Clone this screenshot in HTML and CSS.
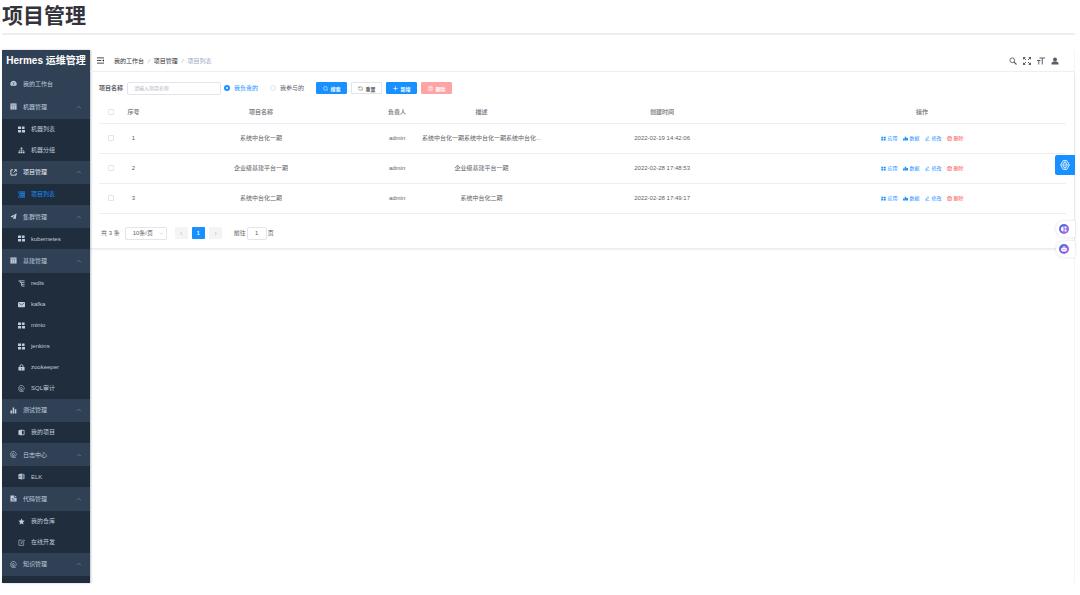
FILE: index.html
```html
<!DOCTYPE html>
<html lang="zh-CN">
  <head>
    <meta charset="UTF-8" />
    <meta name="viewport" content="width=device-width, initial-scale=1.0" />
    <title>项目管理</title>
    <link rel="stylesheet" href="styles.css" />
  </head>
  <body>
    <!-- 图标 -->
    <svg class="sprite" aria-hidden="true">
      <symbol id="i-dashboard" viewBox="0 0 16 16"><path d="M8 2a7 7 0 0 0-6 11h12A7 7 0 0 0 8 2z" fill="currentColor"/><path d="M8 11l1-6M4 9h1M11 9h1M5 5l1 1" stroke="#304156" stroke-width="1.5"/></symbol>
      <symbol id="i-table" viewBox="0 0 16 16"><path d="M1 1h14v14H1z" fill="currentColor"/><path d="M1 4.500h14M6 5v10M10.500 5v10" stroke="#304156" stroke-width=".8"/></symbol>
      <symbol id="i-grid" viewBox="0 0 16 16"><path d="M0 1h7v6H0zM0 9h7v6H0zM9 9h7v6H9zM9 1h6v6H9z" fill="currentColor"/></symbol>
      <symbol id="i-tree" viewBox="0 0 16 16"><path d="M6 1h4v4H6zM1 10h4v4H1zM6 10h4v4H6zM11 10h4v4h-4z" fill="currentColor"/><path d="M8 5v5M3 10V7.500h10V10" fill="none" stroke="currentColor" stroke-width="1.200"/></symbol>
      <symbol id="i-link" viewBox="0 0 16 16"><path d="M7 2H2v12h12V9M10 1.500h4.500V6M14 2L8 8" fill="none" stroke="currentColor" stroke-width="1.800"/></symbol>
      <symbol id="i-list" viewBox="0 0 16 16"><path d="M0 2.500h3M4 2.500h12M2 6.200h2M5 6.200h11M2 9.900h2M5 9.900h11M0 13.600h3M4 13.600h12" stroke="currentColor" stroke-width="2.400"/></symbol>
      <symbol id="i-plane" viewBox="0 0 16 16"><path d="M15 1L1 8l4 2 7-6-5 7v4l2-3 4 2z" fill="currentColor"/></symbol>
      <symbol id="i-treetable" viewBox="0 0 16 16"><path d="M1 2h14M7 6h8M9 10h6M9 14h6M5 2v4h2M8 6v8" fill="none" stroke="currentColor" stroke-width="1.800"/></symbol>
      <symbol id="i-mail" viewBox="0 0 16 16"><rect x="0" y="2" width="16" height="12" rx="1.500" fill="currentColor"/><path d="M2 5l6 4 6-4" fill="none" stroke="#1f2d3d" stroke-width="1.300"/></symbol>
      <symbol id="i-lock" viewBox="0 0 16 16"><rect x="1" y="7" width="14" height="8" rx="1" fill="currentColor"/><path d="M4.500 7V5a3.500 3.500 0 0 1 7 0v2" fill="none" stroke="currentColor" stroke-width="2"/><path d="M8 9.500v3" stroke="#1f2d3d" stroke-width="1.500"/></symbol>
      <symbol id="i-log" viewBox="0 0 16 16"><path d="M2 12V4l4-3h4l4 4v1M2 12l4 3h7" fill="none" stroke="currentColor" stroke-width="1.400"/><circle cx="7.500" cy="8" r="2.500" fill="none" stroke="currentColor" stroke-width="1.300"/><path d="M5 12h6l4-3-2-2" fill="none" stroke="currentColor" stroke-width="1.300"/></symbol>
      <symbol id="i-chart" viewBox="0 0 16 16"><path d="M1 8h3.500v7H1zM6 1h3.500v14H6zM11 5h3.500v10H11z" fill="currentColor"/></symbol>
      <symbol id="i-book" viewBox="0 0 16 16"><path d="M1 3l8-2v14l-8-2z" fill="currentColor"/><path d="M9 3h5v10H9" fill="none" stroke="currentColor" stroke-width="1.800"/></symbol>
      <symbol id="i-excel" viewBox="0 0 16 16"><path d="M1 3l8-2v14l-8-2z" fill="currentColor"/><path d="M9 3h5v10H9M9 6.500h5M9 9.500h5" fill="none" stroke="currentColor" stroke-width="1.500"/><path d="M3 6l3.500 4.500M6.500 6L3 10.500" stroke="#1f2d3d"/></symbol>
      <symbol id="i-doc" viewBox="0 0 16 16"><path d="M1 1h8v5h6v9H1z" fill="currentColor"/><path d="M10.500 1v3.500H15z" fill="currentColor"/><path d="M4 8.500h5M4 11.500h8" stroke="#304156" stroke-width="1.300"/></symbol>
      <symbol id="i-star" viewBox="0 0 16 16"><path d="M8 1l2.200 4.700 5 .6-3.700 3.500 1 5.200L8 12.500 3.500 15l1-5.200L.8 6.300l5-.6z" fill="currentColor"/></symbol>
      <symbol id="i-edit" viewBox="0 0 16 16"><path d="M9 2.500H2v12h11V8M7 10V8l6-6.500 2 2L9 10z" fill="none" stroke="currentColor" stroke-width="1.400"/></symbol>
      <symbol id="i-up" viewBox="0 0 16 16"><path d="M3 11l5-5 5 5" fill="none" stroke="currentColor" stroke-width="1.500"/></symbol>
      <symbol id="i-left" viewBox="0 0 16 16"><path d="M10 3L5 8l5 5" fill="none" stroke="currentColor" stroke-width="2"/></symbol>
      <symbol id="i-right" viewBox="0 0 16 16"><path d="M6 3l5 5-5 5" fill="none" stroke="currentColor" stroke-width="2"/></symbol>
      <symbol id="i-fold" viewBox="0 0 16 16"><path d="M0 2h16M0 8h10M0 14h16" stroke="currentColor" stroke-width="2"/><path d="M16 5v6l-4-3z" fill="currentColor"/></symbol>
      <symbol id="i-search" viewBox="0 0 16 16"><circle cx="6.500" cy="6.500" r="4.700" fill="none" stroke="currentColor" stroke-width="1.800"/><path d="M10 10l5 5" stroke="currentColor" stroke-width="2.200"/></symbol>
      <symbol id="i-round" viewBox="0 0 16 16"><circle cx="7.500" cy="7.500" r="6" fill="none" stroke="currentColor" stroke-width="1.800"/><path d="M12 12l3 3" stroke="currentColor" stroke-width="2"/></symbol>
      <symbol id="i-full" viewBox="0 0 16 16"><path d="M0 5.500V0h5.500zM10.500 0H16v5.500zM16 10.500V16h-5.500zM5.500 16H0v-5.500z" fill="currentColor"/><path d="M2 2l4 4M14 2l-4 4M14 14l-4-4M2 14l4-4" stroke="currentColor" stroke-width="2"/></symbol>
      <symbol id="i-size" viewBox="0 0 16 16"><path d="M5 2h11M10.500 2v13M0 7h7M3.500 7v8" stroke="currentColor" stroke-width="2"/></symbol>
      <symbol id="i-user" viewBox="0 0 16 16"><circle cx="8" cy="5" r="4" fill="currentColor"/><path d="M1 15v-3q0-2 4-3h6q4 1 4 3v3z" fill="currentColor"/></symbol>
      <symbol id="i-refresh" viewBox="0 0 16 16"><path d="M2 8V3h8a4 4 0 0 1 4 4v6H6a4 4 0 0 1-4-3M2 3l3 3" fill="none" stroke="currentColor" stroke-width="1.600"/></symbol>
      <symbol id="i-plus" viewBox="0 0 16 16"><path d="M8 1v14M1 8h14" stroke="currentColor" stroke-width="2"/></symbol>
      <symbol id="i-trash" viewBox="0 0 16 16"><path d="M0 4h16M5 4V1.500h6V4M2.500 4v10.500h11V4M6.300 7v5M9.700 7v5" fill="none" stroke="currentColor" stroke-width="1.700"/></symbol>
      <symbol id="i-menu" viewBox="0 0 16 16"><path d="M1 2h6v5H1zM9 2h6v5H9zM1 9h6v5H1zM9 9h6v5H9z" fill="currentColor"/></symbol>
      <symbol id="i-data" viewBox="0 0 16 16"><path d="M0 8h5v6H0zM5.500 2h5v12h-5zM11 6h5v8h-5z" fill="currentColor"/></symbol>
      <symbol id="i-pen" viewBox="0 0 16 16"><path d="M3 10l6-8 3 2-6 8-4 1zM2 15h13" fill="none" stroke="currentColor" stroke-width="1.600"/></symbol>
      <symbol id="i-setting" viewBox="0 0 16 16"><path d="M5 1h6l4 7-4 7H5L1 8z" fill="none" stroke="currentColor" stroke-width="1.300"/><ellipse cx="8" cy="8" rx="3.200" ry="4.500" fill="none" stroke="currentColor" stroke-width="1.200"/><path d="M8 1v14M1 8h14" stroke="currentColor" stroke-width=".8"/></symbol>
      <linearGradient id="violet" x1="0" y1="0" x2="1" y2="1"><stop offset="0" stop-color="#3f6be0"/><stop offset="1" stop-color="#c063e0"/></linearGradient>
    </svg>

    <h1 class="page-title">项目管理</h1>

    <div class="app">
      <nav class="sidebar">
        <div class="logo">Hermes 运维管理</div>
        <a class="group" href="#"><svg class="icon"><use href="#i-dashboard"/></svg>我的工作台</a>
        <a class="group" href="#"><svg class="icon"><use href="#i-table"/></svg>机器管理<svg class="arrow"><use href="#i-up"/></svg></a>
        <a class="sub" href="#"><svg class="icon"><use href="#i-grid"/></svg>机器列表</a>
        <a class="sub" href="#"><svg class="icon"><use href="#i-tree"/></svg>机器分组</a>
        <a class="group current" href="#"><svg class="icon"><use href="#i-link"/></svg>项目管理<svg class="arrow"><use href="#i-up"/></svg></a>
        <a class="sub active" href="#"><svg class="icon"><use href="#i-list"/></svg>项目列表</a>
        <a class="group" href="#"><svg class="icon"><use href="#i-plane"/></svg>集群管理<svg class="arrow"><use href="#i-up"/></svg></a>
        <a class="sub" href="#"><svg class="icon"><use href="#i-grid"/></svg>kubernetes</a>
        <a class="group" href="#"><svg class="icon"><use href="#i-table"/></svg>基建管理<svg class="arrow"><use href="#i-up"/></svg></a>
        <a class="sub" href="#"><svg class="icon"><use href="#i-treetable"/></svg>redis</a>
        <a class="sub" href="#"><svg class="icon"><use href="#i-mail"/></svg>kafka</a>
        <a class="sub" href="#"><svg class="icon"><use href="#i-grid"/></svg>minio</a>
        <a class="sub" href="#"><svg class="icon"><use href="#i-grid"/></svg>jenkins</a>
        <a class="sub" href="#"><svg class="icon"><use href="#i-lock"/></svg>zookeeper</a>
        <a class="sub" href="#"><svg class="icon"><use href="#i-log"/></svg>SQL审计</a>
        <a class="group" href="#"><svg class="icon"><use href="#i-chart"/></svg>测试管理<svg class="arrow"><use href="#i-up"/></svg></a>
        <a class="sub" href="#"><svg class="icon"><use href="#i-book"/></svg>我的项目</a>
        <a class="group" href="#"><svg class="icon"><use href="#i-log"/></svg>日志中心<svg class="arrow"><use href="#i-up"/></svg></a>
        <a class="sub" href="#"><svg class="icon"><use href="#i-excel"/></svg>ELK</a>
        <a class="group" href="#"><svg class="icon"><use href="#i-doc"/></svg>代码管理<svg class="arrow"><use href="#i-up"/></svg></a>
        <a class="sub" href="#"><svg class="icon"><use href="#i-star"/></svg>我的仓库</a>
        <a class="sub" href="#"><svg class="icon"><use href="#i-edit"/></svg>在线开发</a>
        <a class="group" href="#"><svg class="icon"><use href="#i-log"/></svg>知识管理<svg class="arrow"><use href="#i-up"/></svg></a>
        <div class="sidebar-end"></div>
      </nav>

      <main class="main">
        <header class="navbar">
          <svg class="fold"><use href="#i-fold"/></svg>
          <div class="breadcrumb">
            <a href="#">我的工作台</a><i>/</i><a href="#">项目管理</a><i>/</i><span>项目列表</span>
          </div>
          <div class="tools">
            <svg><use href="#i-search"/></svg>
            <svg><use href="#i-full"/></svg>
            <svg><use href="#i-size"/></svg>
            <svg><use href="#i-user"/></svg>
          </div>
        </header>

        <section class="card">
          <form class="filter">
            <label class="filter-label" for="name">项目名称</label>
            <input class="field name" id="name" type="text" placeholder="请输入项目名称" />
            <label class="radio"><input type="radio" name="scope" checked /><span>我负责的</span></label>
            <label class="radio"><input type="radio" name="scope" /><span>我参与的</span></label>
            <div class="buttons">
              <button class="btn primary" type="button"><svg><use href="#i-round"/></svg>搜索</button>
              <button class="btn" type="button"><svg><use href="#i-refresh"/></svg>重置</button>
              <button class="btn primary" type="button"><svg><use href="#i-plus"/></svg>新增</button>
              <button class="btn danger" type="button" disabled><svg><use href="#i-trash"/></svg>删除</button>
            </div>
          </form>

          <table class="table">
            <colgroup>
              <col class="col-check" /><col class="col-no" /><col class="col-name" /><col class="col-owner" /><col class="col-desc" /><col class="col-time" /><col />
            </colgroup>
            <thead>
              <tr>
                <th><input type="checkbox" aria-label="全选" /></th>
                <th>序号</th><th>项目名称</th><th>负责人</th><th>描述</th><th>创建时间</th><th>操作</th>
              </tr>
            </thead>
            <tbody>
              <tr>
                <td><input type="checkbox" aria-label="选择 1" /></td>
                <td>1</td><td>系统中台化一期</td><td>admin</td>
                <td>系统中台化一期系统中台化一期系统中台化...</td>
                <td>2022-02-19 14:42:06</td>
                <td><div class="actions"><a href="#"><svg><use href="#i-menu"/></svg>应用</a><a href="#"><svg><use href="#i-data"/></svg>数据</a><a href="#"><svg><use href="#i-pen"/></svg>修改</a><a class="del" href="#"><svg><use href="#i-trash"/></svg>删除</a></div></td>
              </tr>
              <tr>
                <td><input type="checkbox" aria-label="选择 2" /></td>
                <td>2</td><td>企业级基建平台一期</td><td>admin</td>
                <td>企业级基建平台一期</td>
                <td>2022-02-28 17:48:53</td>
                <td><div class="actions"><a href="#"><svg><use href="#i-menu"/></svg>应用</a><a href="#"><svg><use href="#i-data"/></svg>数据</a><a href="#"><svg><use href="#i-pen"/></svg>修改</a><a class="del" href="#"><svg><use href="#i-trash"/></svg>删除</a></div></td>
              </tr>
              <tr>
                <td><input type="checkbox" aria-label="选择 3" /></td>
                <td>3</td><td>系统中台化二期</td><td>admin</td>
                <td>系统中台化二期</td>
                <td>2022-02-28 17:49:17</td>
                <td><div class="actions"><a href="#"><svg><use href="#i-menu"/></svg>应用</a><a href="#"><svg><use href="#i-data"/></svg>数据</a><a href="#"><svg><use href="#i-pen"/></svg>修改</a><a class="del" href="#"><svg><use href="#i-trash"/></svg>删除</a></div></td>
              </tr>
            </tbody>
          </table>

          <div class="pagination">
            <span>共 3 条</span>
            <div class="select-wrap">
              <select class="field" aria-label="每页条数"><option>10条/页</option></select>
              <svg><use href="#i-up"/></svg>
            </div>
            <div class="pager">
              <button type="button" disabled aria-label="上一页"><svg><use href="#i-left"/></svg></button>
              <button class="on" type="button">1</button>
              <button type="button" disabled aria-label="下一页"><svg><use href="#i-right"/></svg></button>
            </div>
            <label class="jump">前往<input class="field" type="text" value="1" />页</label>
          </div>
        </section>
      </main>

      <!-- 右侧悬浮按钮 -->
      <button class="setting" type="button" aria-label="设置"><svg><use href="#i-setting"/></svg></button>
      <div class="floats">
        <button type="button" aria-label="翻译"><svg viewBox="0 0 20 20"><circle cx="10" cy="10" r="10" fill="url(#violet)"/><path d="M9 5a5 5 0 0 0 0 10zM11 5h4v4h-4zM11 11h4v4h-4z" fill="#fff"/></svg></button>
        <button type="button" aria-label="助手"><svg viewBox="0 0 20 20"><circle cx="10" cy="10" r="10" fill="url(#violet)"/><path d="M10 4v3" stroke="#fff" stroke-width="2"/><rect x="4" y="7" width="12" height="8" rx="4" fill="#fff"/><path d="M8 10v2M12 10v2" stroke="#6a67e0" stroke-width="1.500"/></svg></button>
      </div>
    </div>
  </body>
</html>
```
FILE: styles.css
```css
* {
  box-sizing: border-box;
}
body {
  margin: 0;
  padding: 0 5px 12px 2px;
  height: 100vh;
  display: flex;
  flex-direction: column;
  background: #fff;
  color: #606266;
  font-family: "Liberation Sans", "Noto Sans CJK SC", sans-serif;
  font-size: 6px;
  line-height: 10px;
}
a {
  color: inherit;
  text-decoration: none;
}
button,
input,
select {
  font-family: inherit;
  color: inherit;
  margin: 0;
}
.sprite {
  position: absolute;
  width: 0;
  height: 0;
}
.page-title {
  margin: 0 0 15px;
  height: 35px;
  border-bottom: 2px solid #eeeeef;
  color: #33333c;
  font-size: 21px;
  line-height: 31px;
}
.app {
  flex: 1;
  display: flex;
  position: relative;
  min-height: 0;
  border-right: 1px solid #f5f5f7;
}

/* 侧边栏 */
.sidebar {
  width: 88px;
  flex: none;
  display: flex;
  flex-direction: column;
  background: #304156;
  color: #bfcbd9;
  box-shadow: 1px 0 2px rgba(0, 21, 41, 0.25);
}
.logo {
  height: 22px;
  flex: none;
  line-height: 22px;
  font-size: 10px;
  font-weight: bold;
  color: #fff;
  text-align: center;
  white-space: nowrap;
}
.group,
.sub {
  display: flex;
  align-items: center;
  gap: 6px;
}
.group {
  flex: 1 1 23px;
  padding: 0 8px;
}
.sub {
  flex: 0 0 21px;
  padding: 0 16px;
  background: #1f2d3d;
}
.current {
  color: #f4f4f5;
}
.active {
  color: #1890ff;
}
.icon {
  width: 7px;
  height: 7px;
}
.arrow {
  width: 6px;
  height: 6px;
  margin-left: auto;
  color: #8592a1;
}
.sidebar-end {
  flex: 0 0 7px;
  background: #1f2d3d;
}

/* 顶部导航 */
.main {
  flex: 1;
  min-width: 0;
}
.navbar {
  display: flex;
  align-items: center;
  height: 22px;
  padding: 0 15px 0 7px;
  border-bottom: 1px solid #f3f4f6;
}
.fold {
  width: 7px;
  height: 7px;
  margin-right: 10px;
  color: #303133;
}
.breadcrumb {
  display: flex;
  color: #303133;
}
.breadcrumb i {
  margin: 0 4px;
  color: #a5abb5;
}
.breadcrumb span {
  color: #97a8be;
}
.tools {
  display: flex;
  gap: 6px;
  margin-left: auto;
  color: #5a5e66;
}
.tools svg {
  width: 8px;
  height: 8px;
}

/* 内容 */
.card {
  padding: 9px 8px 8px 9px;
  box-shadow: 0 1px 3px rgba(0, 0, 0, 0.12);
}
.filter {
  display: flex;
  align-items: center;
  height: 14px;
  margin-bottom: 7px;
}
.filter-label {
  margin-right: 4px;
  font-weight: bold;
}
.field {
  height: 13px;
  padding: 0 7px;
  border: 1px solid #e3e5ea;
  border-radius: 2px;
  background: #fff;
  font-size: 6px;
  outline: none;
}
.field::placeholder {
  color: #b4b8c0;
}
.name {
  width: 94px;
  margin-right: 3px;
  padding: 0 6px;
  font-size: 5px;
}
.radio {
  display: flex;
  align-items: center;
  gap: 4px;
  margin-right: 12px;
}
.radio input,
.table input {
  appearance: none;
  width: 6px;
  height: 6px;
  border: 1px solid #e2e4e9;
  background: #fff;
}
.radio input {
  border-radius: 50%;
}
.radio input:checked {
  border: 2px solid #1890ff;
}
.radio input:checked + span {
  color: #1890ff;
}
.buttons {
  display: flex;
  gap: 4px;
}
.btn {
  display: flex;
  align-items: center;
  justify-content: center;
  gap: 3px;
  width: 31px;
  height: 12px;
  padding: 0;
  border: 1px solid #e3e5ea;
  border-radius: 1px;
  background: #fff;
  font-size: 5px;
  font-weight: bold;
}
.btn svg {
  width: 5px;
  height: 5px;
}
.primary {
  border-color: #1890ff;
  background: #1890ff;
  color: #fff;
}
.danger {
  border-color: #ffa4a4;
  background: #ffa4a4;
  color: #fff;
}

.table {
  width: 100%;
  table-layout: fixed;
  border-collapse: collapse;
  text-align: center;
}
.col-check,
.col-no {
  width: 23px;
}
.col-name,
.col-time {
  width: 24%;
}
.col-owner {
  width: 40px;
}
.col-desc {
  width: 129px;
}
.table th,
.table td {
  height: 30px;
  padding: 0 3px;
  border-bottom: 1px solid #eceef2;
  overflow: hidden;
  white-space: nowrap;
  text-overflow: ellipsis;
}
.table th {
  height: 21px;
  padding: 0;
  color: #85888e;
  font-weight: bold;
}
.table input {
  display: block;
  margin: 0 auto;
  border-radius: 1px;
}
.actions {
  display: flex;
  justify-content: center;
  gap: 5px;
  color: #1890ff;
  font-size: 5px;
}
.actions a {
  display: flex;
  align-items: center;
  gap: 2px;
}
.actions svg {
  width: 5px;
  height: 5px;
}
.actions .del {
  color: #ff4949;
}

/* 分页 */
.pagination {
  display: flex;
  align-items: center;
  height: 13px;
  margin: 13px 2px 0;
}
.select-wrap {
  display: flex;
  position: relative;
  margin: 0 8px 0 5px;
}
.select-wrap select {
  appearance: none;
  width: 42px;
}
.select-wrap svg {
  position: absolute;
  top: 4px;
  right: 3px;
  width: 5px;
  height: 5px;
  color: #b4b8c0;
  transform: rotate(180deg);
}
.pager {
  display: flex;
  gap: 4px;
  margin-right: 12px;
}
.pager button {
  display: flex;
  align-items: center;
  justify-content: center;
  width: 13px;
  height: 12px;
  padding: 0;
  border: 0;
  border-radius: 1px;
  background: #f4f4f5;
  color: #b4b8c0;
  font-size: 5px;
  font-weight: bold;
}
.pager svg {
  width: 5px;
  height: 5px;
}
.pager .on {
  background: #1890ff;
  color: #fff;
}
.jump {
  display: flex;
  align-items: center;
  gap: 1px;
}
.jump input {
  width: 20px;
  padding: 0;
  text-align: center;
}

.setting {
  position: absolute;
  top: 105px;
  right: -1px;
  width: 20px;
  height: 20px;
  padding: 5px;
  border: 0;
  border-radius: 2px 0 0 2px;
  background: #1890ff;
  color: #fff;
}
.setting svg {
  display: block;
  width: 10px;
  height: 10px;
}
.floats {
  position: absolute;
  top: 171px;
  right: -1px;
  display: grid;
  gap: 4px;
}
.floats button {
  width: 19px;
  height: 16px;
  padding: 3px;
  border: 0;
  border-radius: 8px 0 0 8px;
  background: #fff;
  box-shadow: 0 0 3px rgba(0, 0, 0, 0.15);
}
.floats svg {
  display: block;
  width: 10px;
  height: 10px;
}
```
